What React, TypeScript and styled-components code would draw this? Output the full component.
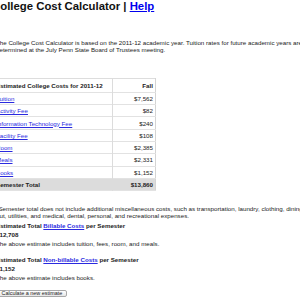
import React from "react";
import styled, { createGlobalStyle } from "styled-components";

const GlobalStyle = createGlobalStyle`
  html, body {
    margin: 0;
    padding: 0;
    background: #fff;
    overflow: hidden;
  }
  body {
    font-family: "Liberation Sans", Arial, sans-serif;
    color: #222;
  }
`;

const Page = styled.div`
  margin-left: -4px;
  width: 330px;
  font-size: 6.2px;
`;

const Title = styled.h1`
  margin: 0 0 0 -4px;
  font-size: 11.36px;
  line-height: 13px;
  font-weight: bold;
  color: #111;
  white-space: nowrap;
`;

const TitleLink = styled.a`
  color: #0000ee;
  text-decoration: underline;
`;

const Intro = styled.p`
  margin: 25.5px 0 0;
  line-height: 7.3px;
  white-space: nowrap;
`;

const CostTable = styled.table`
  margin: 25px 0 0 -2px;
  border-collapse: collapse;
  width: 162px;
  font-size: 6.2px;
  border-top: 1px solid #ddd;
  border-right: 1px solid #d4d4d4;
`;

const Row = styled.tr<{ $head?: boolean; $total?: boolean }>`
  height: ${(p) => (p.$head ? "13.7px" : "12.3px")};
  background: ${(p) => (p.$total ? "#dcdcdc" : "#fff")};
  font-weight: ${(p) => (p.$head || p.$total ? "bold" : "normal")};
  border-bottom: 1px solid #e2e2e2;
`;

const Cell = styled.td<{ $right?: boolean }>`
  padding: 0 2px;
  line-height: 7px;
  vertical-align: middle;
  text-align: ${(p) => (p.$right ? "right" : "left")};
  width: ${(p) => (p.$right ? "38px" : "auto")};
  border-left: ${(p) => (p.$right ? "1px solid #dcdcdc" : "none")};
  color: #222;
  white-space: nowrap;
`;

const ItemLink = styled.a`
  color: #2a2adf;
  text-decoration: underline;
`;

const Note = styled.p`
  margin: 13.8px 0 0;
  line-height: 7.3px;
  white-space: nowrap;
`;

const Line = styled.div<{ $bold?: boolean; $gap?: number }>`
  margin-top: ${(p) => p.$gap ?? 0}px;
  line-height: 9px;
  font-weight: ${(p) => (p.$bold ? "bold" : "normal")};
  white-space: nowrap;
`;

const Button = styled.button`
  display: block;
  margin: 7.4px 0 0 2px;
  height: 7.6px;
  padding: 0 3.5px 0 2.5px;
  font-family: "Liberation Sans", Arial, sans-serif;
  font-size: 5.45px;
  line-height: 5px;
  color: #222;
  background: linear-gradient(#ffffff, #e6e6e6);
  border: 1px solid #a8a8a8;
  border-radius: 2px;
  white-space: nowrap;
`;

const costs = [
  { name: "Tuition", amount: "$7,562" },
  { name: "Activity Fee", amount: "$82" },
  { name: "Information Technology Fee", amount: "$240" },
  { name: "Facility Fee", amount: "$108" },
  { name: "Room", amount: "$2,385" },
  { name: "Meals", amount: "$2,331" },
  { name: "Books", amount: "$1,152" },
];

const App = () => {
  return (
    <>
      <GlobalStyle />
      <Page>
        <Title>
          College Cost Calculator | <TitleLink href="#">Help</TitleLink>
        </Title>
        <Intro>
          The College Cost Calculator is based on the 2011-12 academic year. Tuition rates for future academic years are
          <br />
          determined at the July Penn State Board of Trustees meeting.
        </Intro>
        <CostTable>
          <tbody>
            <Row $head>
              <Cell>Estimated College Costs for 2011-12</Cell>
              <Cell $right>Fall</Cell>
            </Row>
            {costs.map((c) => (
              <Row key={c.name}>
                <Cell>
                  <ItemLink href="#">{c.name}</ItemLink>
                </Cell>
                <Cell $right>{c.amount}</Cell>
              </Row>
            ))}
            <Row $total>
              <Cell>Semester Total</Cell>
              <Cell $right>$13,860</Cell>
            </Row>
          </tbody>
        </CostTable>
        <Note>
          *Semester total does not include additional miscellaneous costs, such as transportation, laundry, clothing, dining
          <br />
          out, utilities, and medical, dental, personal, and recreational expenses.
        </Note>
        <Line $bold $gap={1}>
          Estimated Total <ItemLink href="#">Billable Costs</ItemLink> per Semester
        </Line>
        <Line $bold>$12,708</Line>
        <Line>The above estimate includes tuition, fees, room, and meals.</Line>
        <Line $bold $gap={7.7}>
          Estimated Total <ItemLink href="#">Non-billable Costs</ItemLink> per Semester
        </Line>
        <Line $bold>$1,152</Line>
        <Line>The above estimate includes books.</Line>
        <Button type="button">Calculate a new estimate</Button>
      </Page>
    </>
  );
};

export default App;
